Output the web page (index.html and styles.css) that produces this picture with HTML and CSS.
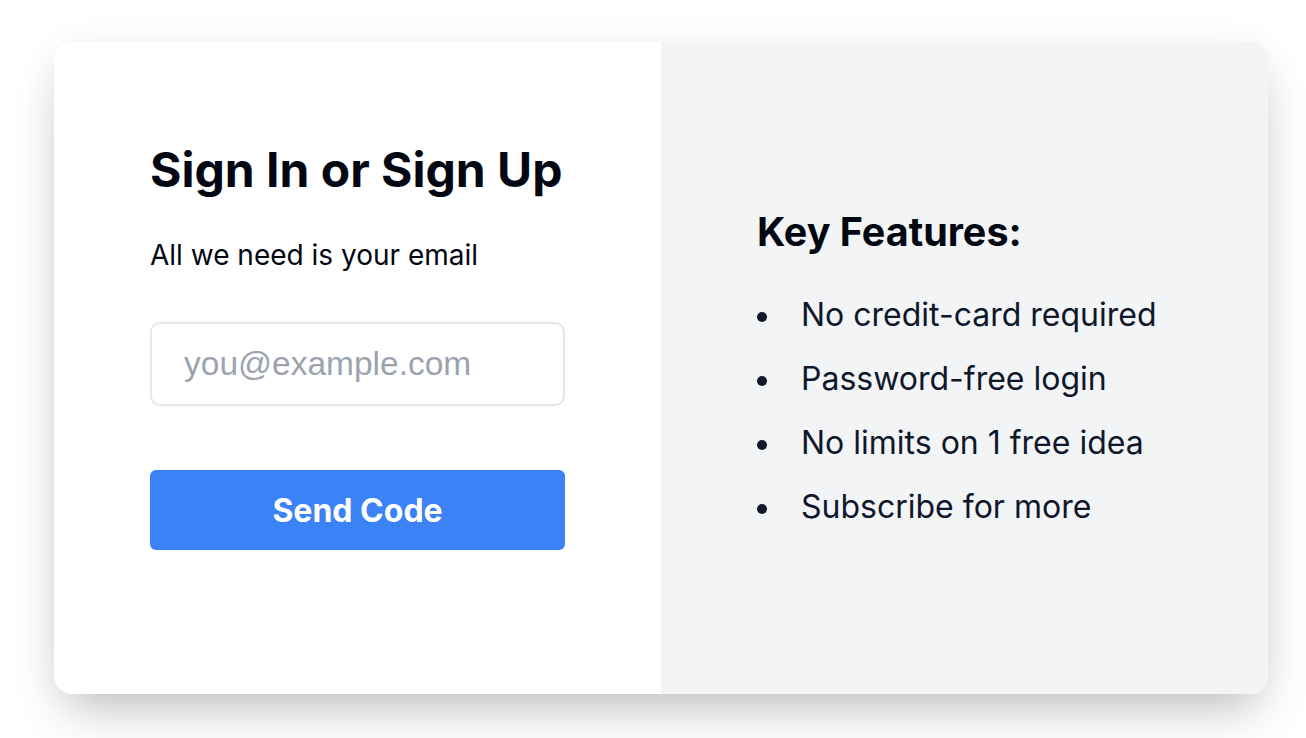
FILE: index.html
```html
<!DOCTYPE html>
<html lang="en">
<head>
  <meta charset="UTF-8" />
  <meta name="viewport" content="width=device-width, initial-scale=1" />
  <title>Sign In or Sign Up</title>
  <link rel="stylesheet" href="styles.css">
</head>
<body>

<div class="auth-card">
  <div class="auth-form">
    <h1>Sign In or Sign Up</h1>
    <p class="lead">All we need is your email</p>
    <input type="email" class="email-input" placeholder="you@example.com" />
    <button class="send-btn">Send Code</button>
  </div>

  <div class="features">
    <h2>Key Features:</h2>
    <ul class="feature-list">
      <li>No credit-card required</li>
      <li>Password-free login</li>
      <li>No limits on 1 free idea</li>
      <li>Subscribe for more</li>
    </ul>
  </div>
</div>

</body>
</html>
```

FILE: styles.css
```css
body {
  margin: 0;
  font-family: 'Inter', 'Noto Sans', sans-serif;
  background: #ffffff;
  min-height: 100vh;
  padding: 42px 38px 44px 54px;
  box-sizing: border-box;
}

.auth-card {
  width: 1214px;
  height: 652px;
  display: grid;
  grid-template-columns: minmax(0, 1fr) minmax(0, 1fr);
  border-radius: 18px;
  overflow: hidden;
  background: white;
  box-shadow: 0 25px 50px -12px rgba(0, 0, 0, 0.25), 0 0 40px rgba(0, 0, 0, 0.04);
}

.auth-form {
  padding: 100px 96px 0;
  display: flex;
  flex-direction: column;
}

h1 {
  margin: 0;
  font-size: 48px;
  line-height: 56px;
  font-weight: 700;
  color: #030712;
}

.lead {
  margin: 41px 0 0;
  font-size: 28px;
  line-height: 32px;
  color: #030712;
}

.email-input {
  margin-top: 51px;
  height: 84px;
  box-sizing: border-box;
  border: 2px solid #e5e7eb;
  border-radius: 10px;
  padding: 0 32px;
  font-family: 'Liberation Sans', Arial, sans-serif;
  font-size: 33.5px;
  color: #111827;
  outline: none;
}

.email-input::placeholder {
  color: #9ca3af;
}

.send-btn {
  margin-top: 64px;
  height: 80px;
  border: none;
  border-radius: 6px;
  background-color: #3b82f6;
  color: white;
  font-family: 'Inter', sans-serif;
  font-size: 32px;
  font-weight: 700;
  cursor: pointer;
}

.features {
  background: #f3f4f6;
  padding: 166px 96px 0;
}

h2 {
  margin: 0;
  font-size: 39.5px;
  line-height: 48px;
  font-weight: 700;
  color: #030712;
}

.feature-list {
  list-style: none;
  margin: 27px 0 0;
  padding: 0;
}

.feature-list li {
  display: flex;
  align-items: center;
  gap: 34px;
  font-size: 32px;
  line-height: 64px;
  color: #0f172a;
}

.feature-list li::before {
  content: "";
  flex: none;
  width: 10px;
  height: 10px;
  border-radius: 50%;
  background: #0f172a;
  margin-top: 4px;
}
```
